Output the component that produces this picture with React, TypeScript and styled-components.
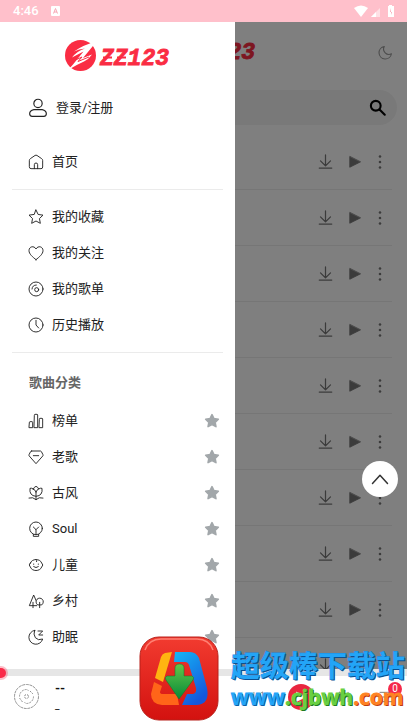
import React from "react";
import styled, { createGlobalStyle } from "styled-components";

const GlobalStyle = createGlobalStyle`
  *, *::before, *::after { box-sizing: border-box; }
  body {
    margin: 0;
    background: #fff;
    color: #222;
    font: 13px/20px Roboto, "Noto Sans CJK SC", sans-serif;
  }
  button, input { font: inherit; color: inherit; }
  a { color: inherit; text-decoration: none; }
  svg { display: block; }
`;

const Screen = styled.div`
  display: flex;
  flex-direction: column;
  height: 100vh;
  position: relative;
  overflow: hidden;
`;

const StatusBar = styled.div`
  flex: none;
  display: flex;
  align-items: center;
  gap: 12px;
  height: 22px;
  padding: 0 13px;
  background: #ffc0cb;
  color: #fff;
  font-weight: 500;
`;

const StatusIcons = styled.div`
  display: flex;
  align-items: center;
  gap: 4px;
  margin-left: auto;
`;

const Stage = styled.div`
  flex: 1;
  min-height: 0;
  position: relative;
  overflow: hidden;
`;

const Page = styled.main`
  padding: 0 10px;
`;

const PageHeader = styled.header`
  display: grid;
  grid-template-columns: 1fr auto 1fr;
  align-items: center;
  height: 60px;
`;

const PageLogo = styled.a`
  grid-column: 2;
  padding-bottom: 4px;
`;

const IconButton = styled.button`
  display: flex;
  align-items: center;
  justify-content: center;
  width: 24px;
  height: 24px;
  padding: 0;
  border: 0;
  background: none;
  color: #777;
`;

const ThemeButton = styled(IconButton)`
  justify-self: end;
  color: #999;
`;

const SearchForm = styled.form`
  display: flex;
  align-items: center;
  height: 35px;
  margin: 8px 0 9px;
  padding: 0 7px 0 16px;
  border-radius: 18px;
  background: #f3f3f3;
`;

const SearchInput = styled.input`
  flex: 1;
  min-width: 0;
  border: 0;
  outline: 0;
  background: none;
`;

const SearchButton = styled(IconButton)`
  color: #000;
`;

const SongList = styled.ul`
  margin: 0;
  padding: 0 5px;
  list-style: none;
`;

const SongRow = styled.li`
  display: flex;
  align-items: center;
  justify-content: flex-end;
  gap: 6px;
  height: 56px;
  padding-right: 5px;
  border-bottom: 1px solid #ececec;
`;

const MoreButton = styled(IconButton)`
  width: 14px;
`;

const Scrim = styled.div`
  position: absolute;
  inset: 0;
  background: rgba(0, 0, 0, 0.5);
`;

const Drawer = styled.aside`
  position: absolute;
  inset: 0 auto 0 0;
  width: 235px;
  max-width: 80%;
  overflow: hidden;
  background: #fff;
`;

const DrawerLogo = styled.a`
  display: flex;
  align-items: center;
  justify-content: center;
  height: 67px;
`;

const LoginLink = styled.a`
  display: flex;
  align-items: center;
  gap: 8px;
  height: 38px;
  margin-bottom: 17px;
  padding-left: 28px;
`;

const Menu = styled.ul`
  margin: 0;
  padding: 0;
  list-style: none;
`;

const MenuItem = styled.li`
  display: flex;
  align-items: center;
  height: 36px;
  padding: 0 11px 0 28px;
`;

const MenuLink = styled.a`
  flex: 1;
  display: flex;
  align-items: center;
  gap: 8px;
`;

const Divider = styled.hr`
  height: 1px;
  margin: 9px 12px;
  border: 0;
  background: #ebebeb;
`;

const SectionTitle = styled.h2`
  margin: 0;
  padding-left: 29px;
  color: #666;
  font-size: 13px;
  font-weight: 700;
  line-height: 41px;
`;

const StarButton = styled(IconButton)`
  color: #a2a7aa;
`;

const TopButton = styled(IconButton)`
  position: absolute;
  right: 9px;
  bottom: 172px;
  width: 36px;
  height: 36px;
  border-radius: 50%;
  background: #fff;
  color: #333;
`;

const Player = styled.footer`
  flex: none;
  position: relative;
`;

const Progress = styled.input`
  display: block;
  width: 100%;
  height: 7px;
  margin: 0;
  appearance: none;
  background: #e6e6e6;
  &::-webkit-slider-thumb {
    appearance: none;
    width: 10px;
    height: 10px;
    margin-left: -4px;
    border-radius: 50%;
    background: #fa2a48;
    box-shadow: 0 0 0 2px rgba(250, 42, 72, 0.3);
  }
`;

const PlayerBar = styled.div`
  display: flex;
  align-items: center;
  gap: 16px;
  height: 47px;
  padding: 0 9px 6px 14px;
`;

const TrackInfo = styled.div`
  flex: 1;
  line-height: 17px;
  color: #111;
`;

const TrackTitle = styled.div`
  font-weight: 700;
`;

const TrackArtist = styled.div`
  font-size: 10px;
`;

const Controls = styled.div`
  display: flex;
  align-items: center;
  gap: 18px;
`;

const PlayButton = styled(IconButton)`
  width: 26px;
  height: 26px;
  border-radius: 50%;
  background: #e9263f;
  color: #fff;
`;

const QueueButton = styled(IconButton)`
  position: relative;
`;

const Badge = styled.span`
  position: absolute;
  right: -4px;
  top: -3px;
  width: 14px;
  border-radius: 7px;
  background: #f5294a;
  color: #fff;
  font-size: 10px;
  line-height: 14px;
`;

const Watermark = styled.div`
  position: absolute;
  right: 2px;
  bottom: 2px;
  display: flex;
  align-items: center;
  gap: 12px;
  pointer-events: none;
`;

const WatermarkText = styled.div`
  white-space: nowrap;
  paint-order: stroke fill;
  color: #23a5f7;
  -webkit-text-stroke: 1px #1688e0;
  text-shadow: 1px 1px 0 #0b4f90;
`;

const WatermarkName = styled.div`
  font-family: "Noto Sans CJK SC", sans-serif;
  font-size: 29px;
  font-weight: 700;
  line-height: 36px;
`;

const WatermarkUrl = styled.div`
  font-family: "Open Sans", sans-serif;
  font-size: 21px;
  font-weight: 700;
  line-height: 30px;
`;

const UrlPart = styled.span<{ $fill: string; $edge: string }>`
  color: ${(p) => p.$fill};
  -webkit-text-stroke-color: ${(p) => p.$fill};
  text-shadow: 1px 1px 0 ${(p) => p.$edge};
`;

const Icon = ({ size = 16, width = 1.4, children }: { size?: number; width?: number; children: React.ReactNode }) => (
  <svg width={size} height={size} viewBox="0 0 24 24" fill="none" stroke="currentColor" strokeWidth={width}
    strokeLinecap="round" strokeLinejoin="round" aria-hidden="true">
    {children}
  </svg>
);

const Logo = () => (
  <svg width="106" height="34" viewBox="0 0 106 34" role="img" aria-label="ZZ123">
    <circle cx="15.500" cy="16.500" r="15.5" fill="#fa2c43" />
    <path d="M9 12.500Q18 6 31 2.500L27.500 7.500L18 19L27 15.500Q24 20 19 22.500Q11 26 3 31L8 25.500L18.500 12.500L7 18.500Q12 12 20 9.500Q14 10 9 12.500Z" fill="#fff" />
    <path d="M7 22.500L17 18L13 22.500L24 18" fill="none" stroke="#fa2c43" strokeWidth="1" />
    <text x="35" y="26" fill="#fa2c43" stroke="#fa2c43" strokeWidth="0.800" fontFamily="Liberation Mono, monospace"
      fontSize="23" fontWeight="700" fontStyle="italic">ZZ123</text>
    <path d="M38 18.500h9M52 18.500h9" stroke="#fa2c43" strokeWidth="2" />
  </svg>
);

const StarShape = "M12 2.500l2.900 6 6.600.900-4.800 4.600 1.200 6.500-5.900-3.100-5.900 3.100 1.200-6.500L2.500 9.400l6.600-.9z";

const icons: Record<string, React.ReactNode> = {
  home: <><path d="M2 9.500Q2 8 3.500 7L10.500 2.200Q12 1.200 13.500 2.200L20.500 7Q22 8 22 9.500V19.500Q22 22 19.500 22H4.500Q2 22 2 19.500Z" /><path d="M9.500 22v-6q0-2.500 2.500-2.500t2.500 2.500v6" /></>,
  star: <path d="M12 1.500l3.200 6.700 7.300 1-5.300 5.100 1.300 7.200-6.500-3.500-6.500 3.500 1.300-7.200L1.500 9.200l7.300-1z" />,
  heart: <path d="M12 22C7 18 1.500 13.500 1.500 8.500C1.500 2 9 .500 12 6C15 .500 22.500 2 22.500 8.500C22.500 13.500 17 18 12 22Z" />,
  disc: <><circle cx="12" cy="12" r="10.500" /><circle cx="13" cy="13" r="3" /><path d="M6 12a6.500 6.500 0 0 1 6.500-6" /></>,
  clock: <><circle cx="12" cy="12" r="10.500" /><path d="M12 5v7l4 4.500" /></>,
  chart: <path d="M2 14q0-1 1-1h3q1 0 1 1v8H2zM9.500 3q0-1 1-1h3q1 0 1 1v19h-5zM17 9q0-1 1-1h3q1 0 1 1v13h-5z" />,
  gem: <><path d="M5.500 3h13q1 0 1.600.900l2.300 4.500q.500 1-.200 2L12 22 1.800 10.400q-.700-1-.200-2l2.300-4.500Q4.500 3 5.500 3Z" /><path d="M8 10h8" /></>,
  lotus: <><path d="M8 6q1-3 4-4q3 1 4 4q-3 1-4 5q-1-4-4-5ZM8 6Q5 4 3 5Q1.500 16 12 17Q22.500 16 21 5q-2-1-5 1M12 11v11M1.500 19.500q6-2 10.500 2.500q4.500-4.500 10.500-2.500" /></>,
  soul: <><circle cx="12" cy="11" r="9.500" /><path d="M8 9l4 4 4-4M12 13v7M8 20v3h8v-3" /></>,
  child: <><path d="M3.500 9C6 2 18 2 20.500 9Q24 12 20.500 15C18 22 6 22 3.500 15Q0 12 3.500 9Z" /><path d="M8.500 10.500v.500M15.500 10.500v.500M8.500 14.500q3.500 3 7 0M12 4q2 1 1 3" /></>,
  trees: <><path d="M13 19H2L8.500 3L12 11M7.500 14v8M17.500 14v8" /><path d="M14 17.500a5.500 5.500 0 1 1 7 0Z" /></>,
  sleep: <><path d="M10 2A10.500 10.500 0 1 0 22 15Q15 18 11 13Q7.500 8 10 2Z" /><path d="M15 3h7l-6 6h6" /></>,
  user: <><circle cx="12" cy="6.500" r="5" /><path d="M7 14h10q5 1 5 5 0 3-3 3H5q-3 0-3-3 0-4 5-5Z" /></>,
  moon: <path d="M10 2.500A10 10 0 1 0 21.500 14A8.500 8.500 0 0 1 10 2.500Z" />,
  download: <path d="M12 1.500V18M4 11l8 8 8-8M2 22.500h20" />,
  play: <path d="M3 3v18l18-9z" fill="currentColor" />,
  more: <g fill="currentColor" stroke="none"><circle cx="12" cy="2.500" r="2.200" /><circle cx="12" cy="12" r="2.200" /><circle cx="12" cy="21.500" r="2.200" /></g>,
  search: <><circle cx="9" cy="9" r="6.500" /><path d="M14 14l7 7" /></>,
  up: <path d="M2 18L12 7l10 11" />,
  prev: <path d="M5 4v16M20 4v16L8 12z" />,
  next: <path d="M19 4v16M4 4v16l12-8z" fill="currentColor" />,
  queue: <path d="M3 5h18M3 12h18M3 19h18" />,
};

const mine = [
  ["star", "我的收藏"],
  ["heart", "我的关注"],
  ["disc", "我的歌单"],
  ["clock", "历史播放"],
];

const categories = [
  ["chart", "榜单"],
  ["gem", "老歌"],
  ["lotus", "古风"],
  ["soul", "Soul"],
  ["child", "儿童"],
  ["trees", "乡村"],
  ["sleep", "助眠"],
];

const Entry = ({ icon, label, starred }: { icon: string; label: string; starred?: boolean }) => (
  <MenuItem>
    <MenuLink href="#"><Icon>{icons[icon]}</Icon>{label}</MenuLink>
    {starred && (
      <StarButton type="button" aria-label={`收藏${label}`}>
        <Icon width={2.4}><path d={StarShape} fill="currentColor" /></Icon>
      </StarButton>
    )}
  </MenuItem>
);

const AppBadge = () => (
  <svg width="80" height="85" viewBox="0 0 80 85" aria-hidden="true">
    <defs>
      <linearGradient id="red" x2="0" y2="1"><stop stopColor="#f23b30" /><stop offset="1" stopColor="#d3120f" /></linearGradient>
      <linearGradient id="blue" x2="0.600" y2="1"><stop stopColor="#15b7f5" /><stop offset="1" stopColor="#1557dc" /></linearGradient>
      <linearGradient id="green" x2="0" y2="1"><stop stopColor="#63c74a" /><stop offset="1" stopColor="#068a38" /></linearGradient>
    </defs>
    <rect x="1" y="1" width="78" height="83" rx="19" fill="url(#red)" stroke="#b8211b" />
    <path d="M6 14Q10 3 22 3H58Q70 3 74 14" fill="none" stroke="#ff8073" strokeWidth="1.500" />
    <path d="M33 16L26 17Q23 18 22 21L16 42L24 46Z" fill="#ffb411" />
    <path d="M15 46L23 50L21 56Q21 58 24 58H38L40 69H23Q12 68 12 58Z" fill="#ff6519" />
    <path d="M36 16H51Q57 16 60 22L68 52Q71 68 58 69H43L48 58H54Q58 57 57 52L50 29Q49 26 46 26H35Z" fill="url(#blue)" />
    <path d="M36 32q0-4 4.500-4t4.500 4v8h8q3 1 1 4L40 63L27 44q-2-3 1-4h8Z" fill="url(#green)" stroke="#087b2d" strokeWidth="0.500" />
  </svg>
);

export default function App() {
  return (
    <Screen>
      <GlobalStyle />
      <StatusBar>
        <span>4:46</span>
        <svg width="10" height="11" viewBox="0 0 10 11" aria-hidden="true">
          <rect x="0" y="0" width="9" height="10" rx="1" fill="#fff" />
          <path d="M2.500 7.500l2-5 2 5M3 6h3" fill="none" stroke="#f7a7b5" />
        </svg>
        <StatusIcons>
          <svg width="40" height="14" viewBox="0 0 40 14" aria-hidden="true" fill="#fff">
            <path d="M0 4Q7-1 14 4L7 13Z" />
            <path d="M17 13L26 4v9Z" opacity="0.500" /><path d="M17 13L22 8v5Z" />
            <path d="M35 1h3v1h2v11h-6V2h1Z" /><path d="M37 4v4h1l-1 3V8h-1z" fill="#f7a7b5" />
          </svg>
        </StatusIcons>
      </StatusBar>

      <Stage>
        <Page>
          <PageHeader>
            <PageLogo href="#"><Logo /></PageLogo>
            <ThemeButton type="button" aria-label="夜间模式"><Icon size={15} width={1.800}>{icons.moon}</Icon></ThemeButton>
          </PageHeader>
          <SearchForm>
            <SearchInput type="search" aria-label="搜索" />
            <SearchButton type="button" aria-label="搜索"><Icon size={18} width={2.800}>{icons.search}</Icon></SearchButton>
          </SearchForm>
          <SongList>
            {Array.from({ length: 10 }, (_, i) => (
              <SongRow key={i}>
                <IconButton type="button" aria-label="下载"><Icon size={15} width={2}>{icons.download}</Icon></IconButton>
                <IconButton type="button" aria-label="播放"><Icon size={14}>{icons.play}</Icon></IconButton>
                <MoreButton type="button" aria-label="更多"><Icon size={14}>{icons.more}</Icon></MoreButton>
              </SongRow>
            ))}
          </SongList>
        </Page>
        <Scrim />
        <TopButton type="button" aria-label="返回顶部"><Icon size={18} width={2}>{icons.up}</Icon></TopButton>
        <Drawer>
          <DrawerLogo href="#"><Logo /></DrawerLogo>
          <LoginLink href="#"><Icon size={20}>{icons.user}</Icon>登录/注册</LoginLink>
          <Menu><Entry icon="home" label="首页" /></Menu>
          <Divider />
          <Menu>{mine.map(([icon, label]) => <Entry key={label} icon={icon} label={label} />)}</Menu>
          <Divider />
          <SectionTitle>歌曲分类</SectionTitle>
          <Menu>{categories.map(([icon, label]) => <Entry key={label} icon={icon} label={label} starred />)}</Menu>
        </Drawer>
      </Stage>

      <Player>
        <Progress type="range" min="0" max="100" defaultValue="0" aria-label="播放进度" />
        <PlayerBar>
          <svg width="25" height="25" viewBox="0 0 25 25" fill="none" stroke="#777" strokeWidth="0.800" aria-hidden="true">
            <circle cx="12.500" cy="12.500" r="12" strokeDasharray="3 0.700" />
            <circle cx="12.500" cy="12.500" r="2" strokeDasharray="2 1" />
            <path d="M5.500 12.500a7 7 0 0 1 7-7l2 1M19.500 12.500a7 7 0 0 1-7 7l-2-1M5.500 14l3 4M16 7l3 3" strokeDasharray="2 1" />
          </svg>
          <TrackInfo>
            <TrackTitle>--</TrackTitle>
            <TrackArtist>_</TrackArtist>
          </TrackInfo>
          <Controls>
            <IconButton type="button" aria-label="上一首"><Icon size={14}>{icons.prev}</Icon></IconButton>
            <PlayButton type="button" aria-label="播放"><Icon size={12}>{icons.play}</Icon></PlayButton>
            <IconButton type="button" aria-label="下一首"><Icon size={14}>{icons.next}</Icon></IconButton>
            <QueueButton type="button" aria-label="播放列表"><Icon>{icons.queue}</Icon><Badge>0</Badge></QueueButton>
          </Controls>
        </PlayerBar>
      </Player>

      <Watermark>
        <AppBadge />
        <WatermarkText>
          <WatermarkName>超级棒下载站</WatermarkName>
          <WatermarkUrl>
            <UrlPart $fill="#23a5f7" $edge="#0b5fa8">www</UrlPart>
            <UrlPart $fill="#68d043" $edge="#217b20">.cjbwh</UrlPart>
            <UrlPart $fill="#ff8324" $edge="#bb3c10">.com</UrlPart>
          </WatermarkUrl>
        </WatermarkText>
      </Watermark>
    </Screen>
  );
}
